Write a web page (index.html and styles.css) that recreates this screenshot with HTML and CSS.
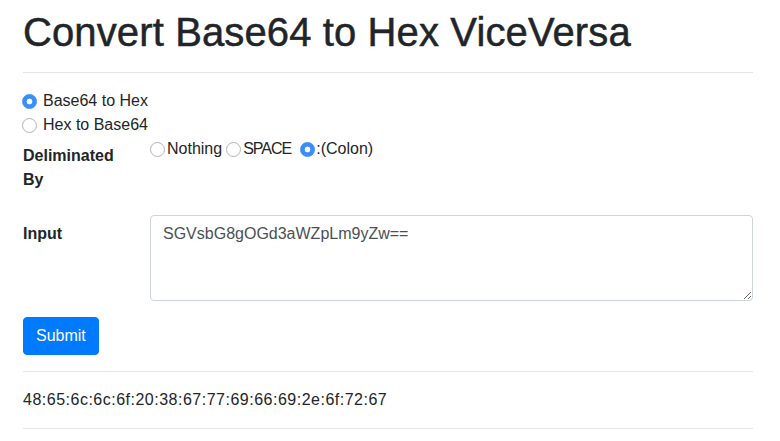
FILE: index.html
```html
<!DOCTYPE html>
<html>
<head>
<meta charset="utf-8">
<title>Convert Base64 to Hex ViceVersa</title>
<link rel="stylesheet" href="styles.css">
</head>
<body>
<div class="container">
  <h1 class="title">Convert Base64 to Hex ViceVersa</h1>
  <hr class="rule">
  <form class="form">
    <div class="form-check">
      <input class="radio" type="radio" name="mode" id="m1" checked>
      <label for="m1">Base64 to Hex</label>
    </div>
    <div class="form-check">
      <input class="radio" type="radio" name="mode" id="m2">
      <label for="m2">Hex to Base64</label>
    </div>
    <div class="form-row">
      <label class="col-label">Deliminated By</label>
      <div class="inline-radios">
        <input class="radio" type="radio" name="delim" id="d1"><label for="d1">Nothing</label>
        <input class="radio" type="radio" name="delim" id="d2"><label class="caps" for="d2">SPACE</label>
        <input class="radio radio-gap" type="radio" name="delim" id="d3" checked><label for="d3">:(Colon)</label>
      </div>
    </div>
    <div class="form-row">
      <label class="col-label" for="inp">Input</label>
      <textarea class="textarea" id="inp" rows="3">SGVsbG8gOGd3aWZpLm9yZw==</textarea>
    </div>
    <button class="btn" type="button">Submit</button>
  </form>
  <hr class="rule">
  <p class="output">48:65:6c:6c:6f:20:38:67:77:69:66:69:2e:6f:72:67</p>
  <hr class="rule">
</div>
</body>
</html>
```
FILE: styles.css
```css
* { box-sizing: border-box; }
html, body { margin: 0; }
body {
  font-family: "Liberation Sans", Arial, sans-serif;
  font-size: 16px;
  line-height: 1.5;
  color: #212529;
  background: #fff;
}
.container {
  padding: 8px 27px 0 23px;
}
.title {
  margin: 0 0 8px;
  font-size: 40px;
  font-weight: 400;
  line-height: 1.2;
  letter-spacing: 0.12px;
  color: #212529;
  -webkit-text-stroke: 0.5px #212529;
}
.rule {
  margin: 16px 0;
  border: 0;
  border-top: 1px solid rgba(0,0,0,0.1);
  height: 0;
}
.form { margin: 0; }
.form-check {
  position: relative;
  padding-left: 20px;
}
.form-check .radio {
  position: absolute;
  left: -1px;
  top: 5px;
  margin: 0;
}
.radio {
  -webkit-appearance: none;
  appearance: none;
  width: 15px;
  height: 15px;
  margin: 0;
  border: 1px solid #b3b3b3;
  border-radius: 50%;
  background: #fff;
  flex: none;
}
.radio:checked {
  border-color: #3b8ef5;
  background: radial-gradient(circle, #fff 0 2.6px, #3b8ef5 3.2px);
}
.form-row {
  display: grid;
  grid-template-columns: 127px 1fr;
  margin-bottom: 16px;
}
.col-label {
  font-weight: 700;
  padding: 7px 30px 7px 0;
}
.inline-radios {
  display: flex;
  align-items: center;
  height: 24px;
}
.inline-radios .radio { margin: 0 2px 0 4px; }
.inline-radios .radio:first-child { margin-left: 0; }
.inline-radios .radio-gap { margin-left: 9px; margin-right: 1px; }
.caps { letter-spacing: -1px; }
.textarea {
  display: block;
  width: 100%;
  height: 86px;
  padding: 6px 12px;
  font-family: inherit;
  font-size: 16px;
  line-height: 1.5;
  color: #495057;
  border: 1px solid #ced4da;
  border-radius: 4px;
  resize: vertical;
  margin: 0;
}
.btn {
  display: inline-block;
  font-family: inherit;
  font-size: 16px;
  line-height: 1.5;
  padding: 6px 12px;
  color: #fff;
  background: #007bff;
  border: 1px solid #007bff;
  border-radius: 4px;
  margin: 0;
  vertical-align: top;
}
.output {
  margin: 0 0 16px;
  letter-spacing: 0.5px;
}
```
